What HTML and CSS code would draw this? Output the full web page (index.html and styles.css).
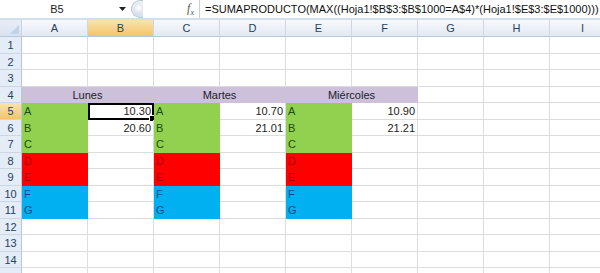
FILE: index.html
```html
<!DOCTYPE html>
<html lang="es">
<head>
    <meta charset="UTF-8">
    <title>Hoja1 - SUMAPRODUCTO</title>
    <link rel="stylesheet" href="styles.css">
</head>
<body>
    <div class="formula-bar">
        <div class="name-box">
            <span class="name">B5</span>
            <svg class="arrow" width="7" height="4" viewBox="0 0 7 4"><path d="M0 0h7L3.5 4z" fill="#222"/></svg>
        </div>
        <div class="grip"><span class="knob"></span></div>
        <div class="fx-area"><span class="fx">f<sub>x</sub></span></div>
        <div class="formula">=SUMAPRODUCTO(MAX((Hoja1!$B$3:$B$1000=A$4)*(Hoja1!$E$3:$E$1000)))</div>
    </div>
    <div class="sheet" id="sheet"></div>
    <script>
        // Datos de la hoja (fila -> celdas)
        const columnas = ['A', 'B', 'C', 'D', 'E', 'F', 'G', 'H', 'I'];
        const letras = { 5: 'A', 6: 'B', 7: 'C', 8: 'D', 9: 'E', 10: 'F', 11: 'G' };
        const numeros = {
            5: ['10.30', '10.70', '10.90'],
            6: ['20.60', '21.01', '21.21']
        };
        const dias = ['Lunes', 'Martes', 'Miércoles'];

        function colorFila(fila) {
            if (fila <= 7) return 'green';
            if (fila <= 9) return 'red';
            return 'blue';
        }

        const sheet = document.getElementById('sheet');
        let html = '<div class="corner"></div>';
        columnas.forEach(c => {
            html += `<div class="col-head${c === 'B' ? ' active' : ''}">${c}</div>`;
        });

        for (let fila = 1; fila <= 15; fila++) {
            // la fila 15 apenas asoma por abajo, sin número visible
            const etiqueta = fila < 15 ? fila : '';
            html += `<div class="row-head${fila === 5 ? ' active' : ''}">${etiqueta}</div>`;
            if (fila === 4) {
                dias.forEach(d => { html += `<div class="cell day">${d}</div>`; });
                html += '<div class="cell"></div><div class="cell"></div><div class="cell"></div>';
                continue;
            }
            for (let i = 0; i < 9; i++) {
                if (letras[fila] && i < 6 && i % 2 === 0) {
                    html += `<div class="cell ${colorFila(fila)}">${letras[fila]}</div>`;
                } else if (numeros[fila] && i < 6) {
                    const sel = (fila === 5 && i === 1) ? ' selected' : '';
                    html += `<div class="cell num${sel}">${numeros[fila][(i - 1) / 2]}</div>`;
                } else {
                    html += '<div class="cell"></div>';
                }
            }
        }
        sheet.innerHTML = html;
    </script>
</body>
</html>
```

FILE: styles.css
```css
body {
    margin: 0;
    width: 600px;
    height: 273px;
    overflow: hidden;
    background-color: #ffffff;
    font-family: "Liberation Sans", Arial, sans-serif;
}

/* Barra de fórmulas */
.formula-bar {
    display: flex;
    height: 18px;
    background-color: #ffffff;
    border-bottom: 2px solid #d3deec;
}
.formula-bar > div {
    flex-shrink: 0;
}
.name-box {
    width: 131px;
    display: flex;
    align-items: center;
    font-size: 11px;
    color: #222;
}
.name {
    width: 114px;
    text-align: center;
}
.arrow {
    margin-left: 5px;
}
.grip {
    width: 12px;
    display: flex;
    align-items: center;
    background: linear-gradient(#eef2f7, #d8e0ea);
    border-radius: 9px 0 0 9px;
    border: 1px solid #b9c6d6;
    border-right: none;
    box-sizing: border-box;
}
.knob {
    width: 8px;
    height: 12px;
    margin-left: 2px;
    border-radius: 50%;
    background: radial-gradient(circle at 60% 40%, #ffffff, #c8d3e0);
}
.fx-area {
    width: 57px;
    display: flex;
    align-items: center;
    justify-content: flex-end;
    padding-right: 5px;
    box-sizing: border-box;
    border-right: 1px solid #c6cfdb;
}
.fx {
    font-family: "Liberation Serif", serif;
    font-style: italic;
    font-size: 12px;
    color: #555;
}
.fx sub {
    font-size: 8px;
}
.formula {
    padding-left: 5px;
    font-size: 11px;
    line-height: 18px;
    color: #111;
    white-space: nowrap;
}

/* Hoja */
.sheet {
    display: grid;
    grid-template-columns: 22px repeat(9, 66px);
    grid-template-rows: 17px;
    grid-auto-rows: 16.5px;
    font-size: 11px;
}
.corner {
    position: relative;
    background: linear-gradient(#e8eef7, #d9e3f0);
    border-right: 1px solid #c5d2e3;
    border-bottom: 1px solid #b6c6db;
    box-sizing: border-box;
}
.corner::after {
    content: "";
    position: absolute;
    right: 2px;
    bottom: 2px;
    border-left: 9px solid transparent;
    border-bottom: 9px solid #c3d1e4;
}
.col-head {
    background: linear-gradient(#f7f9fc, #e2e9f3);
    border-right: 1px solid #cdd7e4;
    border-bottom: 1px solid #b6c6db;
    box-sizing: border-box;
    text-align: center;
    line-height: 16px;
    color: #27415f;
}
.col-head.active,
.row-head.active {
    background: linear-gradient(#fbe3ae, #f3c568);
    color: #27415f;
}
.row-head {
    background-color: #e4ecf7;
    border-right: 1px solid #b6c6db;
    border-bottom: 1px solid #cdd7e4;
    box-sizing: border-box;
    text-align: center;
    line-height: 16px;
    color: #27415f;
}
.cell {
    position: relative;
    border-right: 1px solid #dadcdd;
    border-bottom: 1px solid #dadcdd;
    box-sizing: border-box;
    padding: 0 2px;
    line-height: 16px;
    color: #222;
    white-space: nowrap;
}
.num {
    text-align: right;
}
.day {
    grid-column: span 2;
    text-align: center;
    background-color: #ccc0da;
    border-color: #ccc0da;
    color: #1d1d2e;
}
.green {
    background-color: #92d050;
    border-color: #92d050;
    color: #1c4d0c;
}
.red {
    background-color: #ff0000;
    border-color: #ff0000;
    color: #9c0006;
}
.blue {
    background-color: #00b0f0;
    border-color: #00b0f0;
    color: #0b4a80;
}
.selected {
    outline: 2px solid #000;
    outline-offset: -2px;
}
.selected::after {
    content: "";
    position: absolute;
    right: -3px;
    bottom: -3px;
    width: 5px;
    height: 5px;
    background-color: #000;
    border: 1px solid #fff;
}
```
